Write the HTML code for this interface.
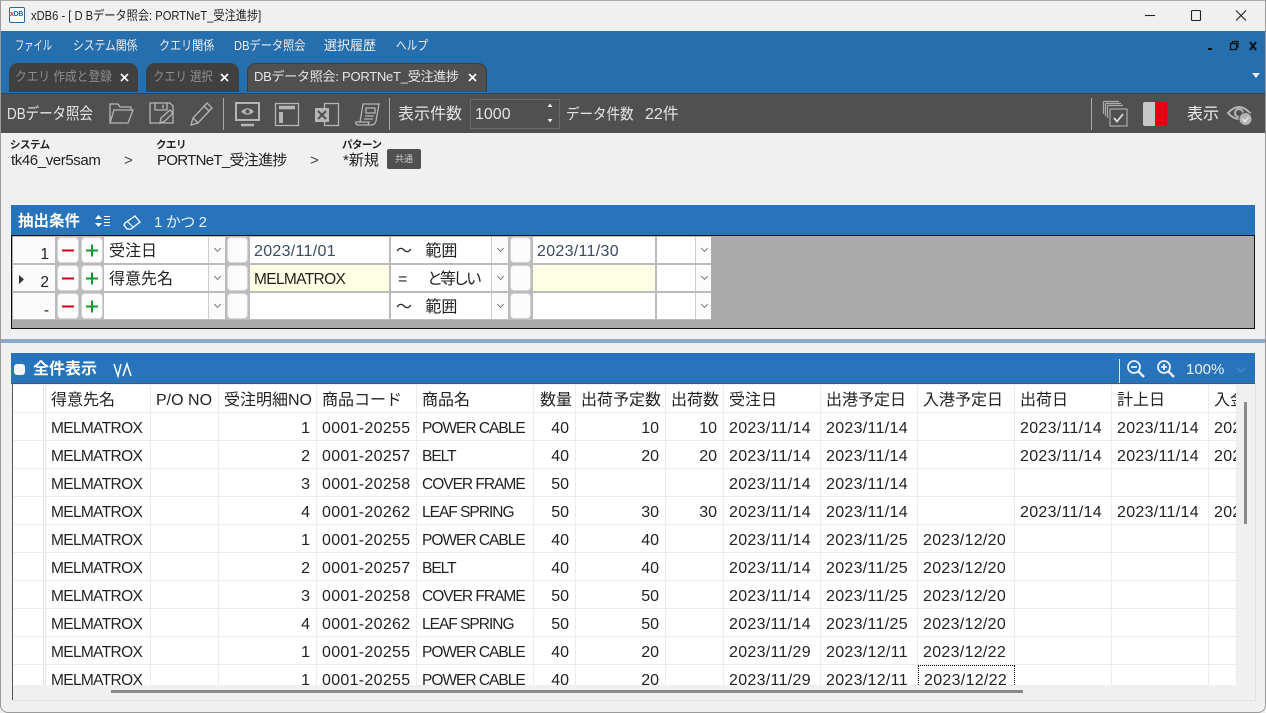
<!DOCTYPE html>
<html lang="ja"><head><meta charset="utf-8"><title>xDB6</title>
<style>
html,body{margin:0;padding:0;width:1266px;height:713px;overflow:hidden;background:#f0f0f0}
body{position:relative;font-family:"Liberation Sans","Noto Sans CJK JP",sans-serif;font-size:15px;color:#222}
.a,.t{position:absolute}
.t{white-space:nowrap;line-height:20px;transform-origin:0 50%}
svg{position:absolute;overflow:visible}
.w{color:#eee}
.tab{position:absolute;top:63px;height:29px;border-radius:9px 9px 0 0;background:#404040}
.r{position:absolute;left:13px;width:698px;height:28px}
.r>div{position:absolute;top:1px;height:26px;box-sizing:border-box}
.rh{left:0;width:42px!important;background:#fbfbfb}
.b{background:#fcfcfc;border:1px solid #d4d4d4;border-radius:4px}
.b1{left:44px;width:22px}.b2{left:68px;width:22px}
.f{background:#fff}
.ar{background:#fbfbfb;border-left:1px solid #ccc}
.ar:after{content:"";position:absolute;left:6px;top:9px;width:4px;height:4px;border:solid #777;border-width:0 1px 1px 0;transform:rotate(45deg)}
.lt{font-size:16px;line-height:30px;padding-left:5px;white-space:nowrap;color:#222}
.dv{font-size:16px;color:#3a4a60;letter-spacing:.3px;padding-left:4px}
.n0{position:absolute;top:9px;right:6px;font-size:15.500px;line-height:18px}
table{border-collapse:separate;border-spacing:0;table-layout:fixed;width:1224px;position:absolute;left:0;top:0;background:#fff}
td{height:28px;box-sizing:border-box;border-right:1px solid #ececec;border-bottom:1px solid #ececec;padding:4px 5px 0;white-space:nowrap;overflow:hidden;font-size:16px;letter-spacing:.3px;line-height:23px;color:#222}
td:first-child{border-right:3px double #e2e2e2;padding:0}
.h td{font-size:16px;letter-spacing:0}
.m{font-size:15.500px;letter-spacing:-.65px}
.p{font-size:15.500px;letter-spacing:-1px}
.n{text-align:right;padding-right:6px;letter-spacing:0}
.fc{border:1px dotted #000;padding-top:3px}
</style></head><body>

<!-- title bar -->
<div class="a" style="left:0;top:0;width:1266px;height:1px;background:#aaa"></div>
<div class="a" style="left:9px;top:7px;width:16px;height:16px;box-sizing:border-box;border:1px solid #24689f;border-radius:2px;background:#fff"></div>
<div class="t" style="left:10px;top:8px;font-size:7px;line-height:14px;font-weight:bold;letter-spacing:-.3px"><span style="color:#c22">x</span><span style="color:#26689f">DB</span></div>
<div class="t" style="left:31px;top:6px;font-size:13px;color:#222;transform:scaleX(.86)">xDB6 - [ D Bデータ照会: PORTNeT_受注進捗]</div>
<svg style="left:1140px;top:8px" width="120" height="16" fill="none" stroke="#222" stroke-width="1.1"><path d="M5 7.500H15"/><rect x="51.500" y="2.500" width="9" height="10" rx="1"/><path d="M96 2.500L106 12.500M106 2.500L96 12.500"/></svg>

<!-- menu area -->
<div class="a" style="left:1px;top:31px;width:1265px;height:62px;background:#266fae"></div>
<div class="t w" style="left:15px;top:36px;font-size:13px;transform:scaleX(.71)">ファイル</div>
<div class="t w" style="left:73px;top:36px;font-size:13px;transform:scaleX(.83)">システム関係</div>
<div class="t w" style="left:159px;top:36px;font-size:13px;transform:scaleX(.85)">クエリ関係</div>
<div class="t w" style="left:234px;top:36px;font-size:13px;transform:scaleX(.86)">DBデータ照会</div>
<div class="t w" style="left:324px;top:36px;font-size:13px">選択履歴</div>
<div class="t w" style="left:396px;top:36px;font-size:13px;transform:scaleX(.82)">ヘルプ</div>
<svg style="left:1205px;top:38px" width="60" height="16" fill="none" stroke="#111" stroke-width="1.300"><path d="M3 11H7" stroke-width="2"/><rect x="25.500" y="5.500" width="6" height="6"/><path d="M27.500 5.500V3.500H33V9H31.500"/><path d="M45 4L51 12M51 4L45 12" stroke-width="2"/></svg>
<svg style="left:1252px;top:73px" width="10" height="6"><path d="M0 0H8L4 5Z" fill="#eee"/></svg>

<!-- tabs -->
<div class="tab" style="left:9px;width:129px"></div>
<div class="tab" style="left:146px;width:93px"></div>
<div class="tab" style="left:247px;width:240px;background:#505050;border:1px solid #3d3d3d;border-bottom:0;box-sizing:border-box"></div>
<div class="t" style="left:15px;top:67px;font-size:13px;color:#8d8d8d;transform:scaleX(.9)">クエリ 作成と登録</div>
<div class="t" style="left:153px;top:67px;font-size:13px;color:#8d8d8d;transform:scaleX(.87)">クエリ 選択</div>
<div class="t" style="left:254px;top:67px;font-size:13px;color:#e6e6e6;letter-spacing:-.25px">DBデータ照会: PORTNeT_受注進捗</div>
<svg style="left:120px;top:73px" width="360" height="10" fill="none" stroke="#fff" stroke-width="1.600"><path d="M1 1L8 8M8 1L1 8"/><path d="M101 1L108 8M108 1L101 8"/><path d="M349 1L356 8M356 1L349 8"/></svg>

<!-- toolbar -->
<div class="a" style="left:1px;top:93px;width:1265px;height:40px;background:#505050;border-top:1px solid #444;box-sizing:border-box"></div>
<div class="t" style="left:7px;top:105px;font-size:16px;color:#e4e4e4;transform:scaleX(.84)">DBデータ照会</div>
<svg style="left:105px;top:98px" width="280" height="32" fill="none" stroke="#b5b5b5" stroke-width="1.300">
 <path d="M5 25V6H13L15 9H26V12M5 25H23L28 12H9L5 25Z"/>
 <path d="M45 5H65L68 8V25H45ZM50 5V12H62V5M58 6.500V10.500" />
 <path d="M55 25L56 20L65 12L68 15L60 23Z" fill="#505050"/>
 <path d="M86 27L88 20L102 5L107 10L93 25ZM88 20L93 25M99 8L104 13"/>
 <rect x="131" y="5" width="23" height="17" stroke-width="2"/>
 <path d="M136 13.500Q142.500 7 149 13.500Q142.500 20 136 13.500Z" fill="#b5b5b5" stroke="none"/>
 <circle cx="142.500" cy="13.500" r="2" fill="#505050" stroke="none"/>
 <path d="M136 27H149" stroke-width="2.500"/>
 <rect x="170.500" y="5.500" width="23" height="22"/>
 <path d="M174 9.500H190" stroke-width="3.500"/><path d="M176 14V25" stroke-width="4"/>
 <rect x="219.500" y="5.500" width="14" height="22"/>
 <rect x="210" y="10" width="14" height="14" fill="#b5b5b5" stroke="none"/>
 <path d="M213 13L221 21M221 13L213 21" stroke="#505050" stroke-width="2"/>
 <path d="M255 24L258 6H274L271 23Q270 27 266 27H254Q250 27 251 24H264L263 27"/>
 <path d="M261 10H270V15H261ZM260 18H269M259 21H268"/>
</svg>
<div class="a" style="left:223px;top:98px;width:1px;height:32px;background:#aaa"></div>
<div class="a" style="left:389px;top:98px;width:1px;height:32px;background:#aaa"></div>
<div class="t" style="left:398px;top:105px;font-size:16px;color:#e4e4e4">表示件数</div>
<div class="a" style="left:470px;top:99px;width:90px;height:30px;box-sizing:border-box;border:1px solid #6a6a6a"></div>
<div class="t" style="left:475px;top:105px;font-size:16px;color:#e4e4e4">1000</div>
<svg style="left:546px;top:102px" width="10" height="22"><path d="M1.500 5L4 1.500L6.500 5ZM1.500 17L4 20.500L6.500 17Z" fill="#eee"/></svg>
<div class="t" style="left:566px;top:105px;font-size:15px;color:#e4e4e4;transform:scaleX(.9)">データ件数</div>
<div class="t" style="left:645px;top:105px;font-size:16px;color:#e4e4e4">22件</div>
<div class="a" style="left:1091px;top:98px;width:1px;height:32px;background:#aaa"></div>
<svg style="left:1100px;top:98px" width="32" height="32" fill="none" stroke="#aaa" stroke-width="1.200">
 <path d="M3.500 3.500H19M5.500 5.500H21M7.500 7.500H23M3.500 3.500V16M5.500 5.500V18M7.500 7.500V20"/>
 <rect x="10" y="11" width="17" height="17" fill="#505050"/>
 <path d="M14 20L17 23.500L23 16" stroke="#ddd" stroke-width="1.800"/>
</svg>
<div class="a" style="left:1143px;top:102px;width:12px;height:24px;background:#c8c8c8;border-radius:2px 0 0 2px"></div>
<div class="a" style="left:1155px;top:102px;width:12px;height:24px;background:#e60012;border-radius:0 2px 2px 0"></div>
<div class="t" style="left:1187px;top:105px;font-size:16px;color:#eee">表示</div>
<svg style="left:1226px;top:101px" width="30" height="26" fill="none" stroke="#b5b5b5" stroke-width="2">
 <path d="M2 12Q13 0 24 12Q13 24 2 12Z"/><circle cx="13" cy="12" r="4"/>
 <circle cx="19.500" cy="18" r="6.500" fill="#b5b5b5" stroke="#505050" stroke-width="1"/>
 <path d="M16.500 18L19 20.500L22.500 16" stroke="#eee" stroke-width="1.300"/>
</svg>

<!-- breadcrumb -->
<div class="t" style="left:10px;top:135px;font-size:10.500px;font-weight:bold;color:#222;letter-spacing:-.5px">システム</div>
<div class="t" style="left:11px;top:151px;font-size:15px;letter-spacing:-.4px">tk46_ver5sam</div>
<div class="t" style="left:124px;top:151px;font-size:15px;color:#444">&gt;</div>
<div class="t" style="left:156px;top:135px;font-size:10.500px;font-weight:bold;letter-spacing:-.5px">クエリ</div>
<div class="t" style="left:157px;top:151px;font-size:15px;letter-spacing:-.7px">PORTNeT_受注進捗</div>
<div class="t" style="left:310px;top:151px;font-size:15px;color:#444">&gt;</div>
<div class="t" style="left:342px;top:135px;font-size:10.500px;font-weight:bold;letter-spacing:-.5px">パターン</div>
<div class="t" style="left:343px;top:151px;font-size:15px">*新規</div>
<div class="a" style="left:387px;top:149px;width:34px;height:20px;background:#505050;border-radius:2px;color:#ccc;font-size:9px;line-height:20px;text-align:center">共通</div>

<!-- condition header -->
<div class="a" style="left:11px;top:205px;width:1244px;height:31px;background:#2874bc"></div>
<div class="t" style="left:18px;top:212px;font-size:15.500px;font-weight:bold;color:#fff">抽出条件</div>
<svg style="left:94px;top:214px" width="50" height="18" fill="none" stroke="#fff"><path d="M1 5L4.500 1L8 5ZM1 9L4.500 13L8 9Z" fill="#fff" stroke="none"/><path d="M10 2.500H16M10 5.500H16M10 8.500H16M10 11.500H16"/><path d="M31 9L41 2L46 8L37 15H33L30 11Z" stroke-width="1.300"/><path d="M33 7L39 13"/></svg>
<div class="t" style="left:154px;top:213px;font-size:15px;color:#e8f0f8;letter-spacing:-.4px">1 かつ 2</div>

<!-- condition grid -->
<div class="a" style="left:11px;top:235px;width:1244px;height:94px;box-sizing:border-box;border:1px solid #111;background:#aaa"></div>
<div class="a" style="left:13px;top:236px;width:698px;height:84px;background:#bbb"></div>

<div class="r" style="top:236px">
 <div class="rh"><div class="n0">1</div></div>
 <div class="b b1"><svg style="left:4px;top:11px" width="14" height="4"><path d="M0 1.500H12" stroke="#d1001c" stroke-width="2"/></svg></div>
 <div class="b b2"><svg style="left:4px;top:6px" width="14" height="14"><path d="M0 6.500H12M6 .500V12.500" stroke="#12962e" stroke-width="2"/></svg></div>
 <div class="f lt" style="left:91px;width:104px">受注日</div><div class="ar" style="left:195px;width:17px"></div>
 <div class="b" style="left:214px;width:21px"></div>
 <div class="f lt dv" style="left:237px;width:139px">2023/11/01</div>
 <div class="f lt" style="left:378px;width:100px">～ &nbsp; 範囲</div><div class="ar" style="left:478px;width:17px"></div>
 <div class="b" style="left:497px;width:21px"></div>
 <div class="f lt dv" style="left:520px;width:122px">2023/11/30</div>
 <div class="f" style="left:644px;width:38px"></div><div class="ar" style="left:682px;width:16px"></div>
</div>
<div class="r" style="top:264px">
 <div class="rh"><div class="n0">2</div></div>
 <div class="b b1"><svg style="left:4px;top:11px" width="14" height="4"><path d="M0 1.500H12" stroke="#d1001c" stroke-width="2"/></svg></div>
 <div class="b b2"><svg style="left:4px;top:6px" width="14" height="14"><path d="M0 6.500H12M6 .500V12.500" stroke="#12962e" stroke-width="2"/></svg></div>
 <div class="f lt" style="left:91px;width:104px">得意先名</div><div class="ar" style="left:195px;width:17px"></div>
 <div class="b" style="left:214px;width:21px"></div>
 <div class="f lt" style="left:237px;width:139px;background:#ffffe6;font-size:15.500px;letter-spacing:-.65px;padding-left:4px">MELMATROX</div>
 <div class="f lt" style="left:378px;width:100px"><span style="position:absolute;left:7px">=</span><span style="position:absolute;left:36px;letter-spacing:-3px">と等しい</span></div><div class="ar" style="left:478px;width:17px"></div>
 <div class="b" style="left:497px;width:21px"></div>
 <div class="f" style="left:520px;width:122px;background:#ffffe6"></div>
 <div class="f" style="left:644px;width:38px"></div><div class="ar" style="left:682px;width:16px"></div>
</div>
<div class="r" style="top:292px">
 <div class="rh"><div class="n0">-</div></div>
 <div class="b b1"><svg style="left:4px;top:11px" width="14" height="4"><path d="M0 1.500H12" stroke="#d1001c" stroke-width="2"/></svg></div>
 <div class="b b2"><svg style="left:4px;top:6px" width="14" height="14"><path d="M0 6.500H12M6 .500V12.500" stroke="#12962e" stroke-width="2"/></svg></div>
 <div class="f" style="left:91px;width:104px"></div><div class="ar" style="left:195px;width:17px"></div>
 <div class="b" style="left:214px;width:21px"></div>
 <div class="f" style="left:237px;width:139px"></div>
 <div class="f lt" style="left:378px;width:100px">～ &nbsp; 範囲</div><div class="ar" style="left:478px;width:17px"></div>
 <div class="b" style="left:497px;width:21px"></div>
 <div class="f" style="left:520px;width:122px"></div>
 <div class="f" style="left:644px;width:38px"></div><div class="ar" style="left:682px;width:16px"></div>
</div>
<svg style="left:19px;top:275px" width="6" height="10"><path d="M0 0L5 4.500L0 9Z" fill="#333"/></svg>

<!-- splitter -->
<div class="a" style="left:0;top:339px;width:1266px;height:4px;background:#8fa6c6"></div>

<!-- result header -->
<div class="a" style="left:11px;top:353px;width:1244px;height:31px;background:#2874bc;border-bottom:1px solid #555;box-sizing:border-box"></div>
<div class="a" style="left:14px;top:364px;width:11px;height:11px;background:#f4f4f4;border-radius:3px"></div>
<div class="t" style="left:33px;top:360px;font-size:16px;font-weight:bold;color:#fff">全件表示</div>
<svg style="left:113px;top:363px" width="20" height="14" fill="none" stroke="#fff" stroke-width="1.500"><path d="M1 1L5 13L8 1M10 13L14 1L18 13"/></svg>
<div class="a" style="left:1119px;top:359px;width:1px;height:24px;background:#dfe8f2"></div>
<svg style="left:1126px;top:359px" width="54" height="22" fill="none" stroke="#e8f0f8" stroke-width="1.800">
 <circle cx="8" cy="8" r="6"/><path d="M12.500 12.500L18 18" stroke-width="2.500"/><path d="M5 8H11"/>
 <circle cx="38" cy="8" r="6"/><path d="M42.500 12.500L48 18" stroke-width="2.500"/><path d="M35 8H41M38 5V11"/>
</svg>
<div class="t" style="left:1186px;top:360px;font-size:15px;color:#e8f0f8">100%</div>
<svg style="left:1236px;top:367px" width="10" height="6" fill="none" stroke="#4a88c4" stroke-width="1.300"><path d="M1 1L5 5L9 1"/></svg>

<!-- data grid -->
<div class="a" style="left:12px;top:384px;width:1px;height:316px;background:#555"></div>
<div class="a" style="left:13px;top:385px;width:1224px;height:300px;overflow:hidden;background:#fff">
<table>
<colgroup><col style="width:33px"><col style="width:105px"><col style="width:68px"><col style="width:98px"><col style="width:100px"><col style="width:117px"><col style="width:42px"><col style="width:90px"><col style="width:58px"><col style="width:97px"><col style="width:97px"><col style="width:97px"><col style="width:97px"><col style="width:97px"><col style="width:28px"></colgroup>
<tr class="h"><td></td><td>得意先名</td><td>P/O NO</td><td>受注明細NO</td><td>商品コード</td><td>商品名</td><td style="padding-left:6px;padding-right:2px">数量</td><td>出荷予定数</td><td>出荷数</td><td>受注日</td><td>出港予定日</td><td>入港予定日</td><td>出荷日</td><td>計上日</td><td>入金日</td></tr>
<tr><td></td><td class="m">MELMATROX</td><td></td><td class="n">1</td><td>0001-20255</td><td class="p">POWER CABLE</td><td class="n">40</td><td class="n">10</td><td class="n">10</td><td>2023/11/14</td><td>2023/11/14</td><td></td><td>2023/11/14</td><td>2023/11/14</td><td>2023/11/14</td></tr>
<tr><td></td><td class="m">MELMATROX</td><td></td><td class="n">2</td><td>0001-20257</td><td class="p">BELT</td><td class="n">40</td><td class="n">20</td><td class="n">20</td><td>2023/11/14</td><td>2023/11/14</td><td></td><td>2023/11/14</td><td>2023/11/14</td><td>2023/11/14</td></tr>
<tr><td></td><td class="m">MELMATROX</td><td></td><td class="n">3</td><td>0001-20258</td><td class="p">COVER FRAME</td><td class="n">50</td><td class="n"></td><td class="n"></td><td>2023/11/14</td><td>2023/11/14</td><td></td><td></td><td></td><td></td></tr>
<tr><td></td><td class="m">MELMATROX</td><td></td><td class="n">4</td><td>0001-20262</td><td class="p">LEAF SPRING</td><td class="n">50</td><td class="n">30</td><td class="n">30</td><td>2023/11/14</td><td>2023/11/14</td><td></td><td>2023/11/14</td><td>2023/11/14</td><td>2023/11/14</td></tr>
<tr><td></td><td class="m">MELMATROX</td><td></td><td class="n">1</td><td>0001-20255</td><td class="p">POWER CABLE</td><td class="n">40</td><td class="n">40</td><td class="n"></td><td>2023/11/14</td><td>2023/11/25</td><td>2023/12/20</td><td></td><td></td><td></td></tr>
<tr><td></td><td class="m">MELMATROX</td><td></td><td class="n">2</td><td>0001-20257</td><td class="p">BELT</td><td class="n">40</td><td class="n">40</td><td class="n"></td><td>2023/11/14</td><td>2023/11/25</td><td>2023/12/20</td><td></td><td></td><td></td></tr>
<tr><td></td><td class="m">MELMATROX</td><td></td><td class="n">3</td><td>0001-20258</td><td class="p">COVER FRAME</td><td class="n">50</td><td class="n">50</td><td class="n"></td><td>2023/11/14</td><td>2023/11/25</td><td>2023/12/20</td><td></td><td></td><td></td></tr>
<tr><td></td><td class="m">MELMATROX</td><td></td><td class="n">4</td><td>0001-20262</td><td class="p">LEAF SPRING</td><td class="n">50</td><td class="n">50</td><td class="n"></td><td>2023/11/14</td><td>2023/11/25</td><td>2023/12/20</td><td></td><td></td><td></td></tr>
<tr><td></td><td class="m">MELMATROX</td><td></td><td class="n">1</td><td>0001-20255</td><td class="p">POWER CABLE</td><td class="n">40</td><td class="n">20</td><td class="n"></td><td>2023/11/29</td><td>2023/12/11</td><td>2023/12/22</td><td></td><td></td><td></td></tr>
<tr><td></td><td class="m">MELMATROX</td><td></td><td class="n">1</td><td>0001-20255</td><td class="p">POWER CABLE</td><td class="n">40</td><td class="n">20</td><td class="n"></td><td>2023/11/29</td><td>2023/12/11</td><td class="fc">2023/12/22</td><td></td><td></td><td></td></tr>
</table>
</div>

<!-- scrollbars -->
<div class="a" style="left:1244px;top:402px;width:3px;height:122px;background:#8a8a8a"></div>
<div class="a" style="left:111px;top:690px;width:912px;height:3px;background:#8a8a8a"></div>
<div class="a" style="left:13px;top:700px;width:1242px;height:1px;background:#e2e2e2"></div>
<div class="a" style="left:1255px;top:384px;width:1px;height:317px;background:#e2e2e2"></div>

<!-- window frame -->
<div class="a" style="left:0;top:0;width:1266px;height:713px;box-sizing:border-box;border:1px solid #9a9a9a;border-top:0;border-radius:0 0 8px 8px;pointer-events:none"></div>
</body></html>
